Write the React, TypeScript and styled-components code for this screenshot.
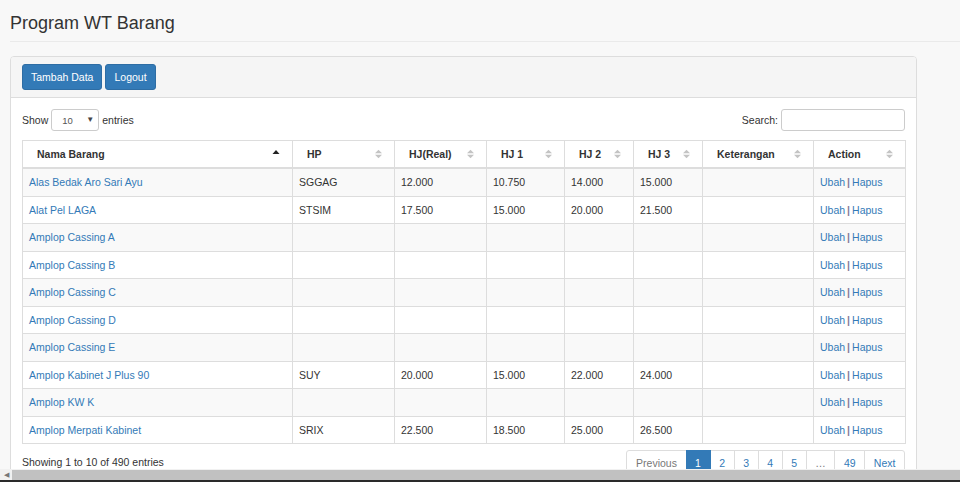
import React from "react";
import styled, { createGlobalStyle } from "styled-components";

const GlobalStyle = createGlobalStyle`
  html, body {
    margin: 0;
    padding: 0;
    height: 482px;
    overflow: hidden;
    background: #f8f8f8;
    font-family: "Liberation Sans", Arial, Helvetica, sans-serif;
    font-size: 10.5px;
    color: #333;
  }
  * { box-sizing: border-box; }
`;

const PageHeader = styled.div`
  margin-left: 10px;
  padding: 13px 0 8px;
  border-bottom: 1px solid #eaeaea;
`;

const Title = styled.h1`
  margin: 0;
  font-size: 18px;
  line-height: 20px;
  font-weight: 400;
  color: #333;
`;

const Panel = styled.div`
  margin: 14px 43px 0 10px;
  border: 1px solid #ddd;
  border-radius: 4px;
  background: #fff;
`;

const PanelHeading = styled.div`
  display: flex;
  gap: 3px;
  padding: 7px 11px;
  background: #f5f5f5;
  border-bottom: 1px solid #ddd;
  border-radius: 3px 3px 0 0;
`;

const Button = styled.button`
  font-family: inherit;
  font-size: 10.5px;
  line-height: 15px;
  padding: 4.5px 8px;
  color: #fff;
  background: #337ab7;
  border: 1px solid #2e6da4;
  border-radius: 3px;
  cursor: pointer;
`;

const PanelBody = styled.div`
  padding: 11px 11px 0;
`;

const Controls = styled.div`
  display: flex;
  justify-content: space-between;
  align-items: center;
  height: 22px;
  margin-bottom: 9px;
`;

const Label = styled.label`
  display: flex;
  align-items: center;
  gap: 3px;
  line-height: 15px;
`;

const SelectWrap = styled.span`
  position: relative;
  display: inline-block;
`;

const Select = styled.select`
  appearance: none;
  -webkit-appearance: none;
  width: 48px;
  height: 22px;
  padding: 0 0 0 10px;
  font-family: inherit;
  font-size: 9.5px;
  color: #555;
  background: #fff;
  border: 1px solid #ccc;
  border-radius: 3px;
  outline: none;
`;

const SelectArrow = styled.span`
  position: absolute;
  right: 5px;
  top: 6px;
  font-size: 8px;
  line-height: 10px;
  color: #444;
  pointer-events: none;
`;

const SearchInput = styled.input`
  width: 124px;
  height: 22px;
  border: 1px solid #ccc;
  border-radius: 3px;
  background: #fff;
  outline: none;
`;

const Table = styled.table`
  width: 883px;
  table-layout: fixed;
  border-collapse: collapse;
  border: 1px solid #ddd;
  margin-bottom: 6px;
`;

const Th = styled.th`
  position: relative;
  text-align: left;
  font-weight: 700;
  font-size: 10.5px;
  line-height: 14px;
  padding: 6px 22px 6px 14px;
  border: 1px solid #ddd;
  border-bottom: 2px solid #ddd;
  color: #333;
  background: #fff;
  white-space: nowrap;
`;

const SortIcon = styled.svg`
  position: absolute;
  right: 12px;
  top: 50%;
  transform: translateY(-50%);
`;

const Tr = styled.tr<{ $odd: boolean }>`
  background: ${(p) => (p.$odd ? "#f9f9f9" : "#fff")};
`;

const Td = styled.td`
  padding: 6px;
  line-height: 14.5px;
  font-size: 10.5px;
  border: 1px solid #ddd;
  color: #333;
  white-space: nowrap;
  overflow: hidden;
`;

const Link = styled.a`
  color: #337ab7;
  text-decoration: none;
`;

const Sep = styled.span`
  color: #86789a;
  font-weight: 700;
  margin: 0 2px;
`;

const Footer = styled.div`
  display: flex;
  justify-content: space-between;
  align-items: center;
`;

const Info = styled.div`
  line-height: 15px;
  padding-bottom: 2px;
`;

const Pagination = styled.ul`
  display: flex;
  list-style: none;
  margin: 0;
  padding: 0;
`;

const PageItem = styled.li<{ $active?: boolean; $disabled?: boolean; $first?: boolean; $last?: boolean }>`
  margin-left: ${(p) => (p.$first ? "0" : "-1px")};
  padding: 4.5px 8.6px;
  line-height: 15px;
  border: 1px solid ${(p) => (p.$active ? "#337ab7" : "#ddd")};
  background: ${(p) => (p.$active ? "#337ab7" : "#fff")};
  color: ${(p) => (p.$active ? "#fff" : p.$disabled ? "#777" : "#337ab7")};
  border-radius: ${(p) => (p.$first ? "3px 0 0 3px" : p.$last ? "0 3px 3px 0" : "0")};
  position: relative;
  z-index: ${(p) => (p.$active ? 2 : 1)};
`;

const ScrollBar = styled.div`
  position: fixed;
  left: 0;
  right: 0;
  bottom: 0;
  height: 13px;
  display: flex;
  background: #f1f1f1;
  border-bottom: 2px solid #2a2a2a;
  z-index: 10;
`;

const ScrollArrow = styled.div`
  width: 12px;
  display: flex;
  align-items: center;
  justify-content: center;
  font-size: 7px;
  color: #777;
`;

const ScrollThumb = styled.div`
  flex: 1;
  margin: 1px 0 0;
  background: #c1c1c1;
`;

const colWidths = [270, 102, 92, 78, 69, 69, 111, 92];
const headers = ["Nama Barang", "HP", "HJ(Real)", "HJ 1", "HJ 2", "HJ 3", "Keterangan", "Action"];

const rows: string[][] = [
  ["Alas Bedak Aro Sari Ayu", "SGGAG", "12.000", "10.750", "14.000", "15.000"],
  ["Alat Pel LAGA", "STSIM", "17.500", "15.000", "20.000", "21.500"],
  ["Amplop Cassing A", "", "", "", "", ""],
  ["Amplop Cassing B", "", "", "", "", ""],
  ["Amplop Cassing C", "", "", "", "", ""],
  ["Amplop Cassing D", "", "", "", "", ""],
  ["Amplop Cassing E", "", "", "", "", ""],
  ["Amplop Kabinet J Plus 90", "SUY", "20.000", "15.000", "22.000", "24.000"],
  ["Amplop KW K", "", "", "", "", ""],
  ["Amplop Merpati Kabinet", "SRIX", "22.500", "18.500", "25.000", "26.500"],
];

const SortBoth = () => (
  <SortIcon width="7" height="9" viewBox="0 0 7 9">
    <polygon points="0,3.8 3.5,0.3 7,3.8" fill="#c4c4c4" />
    <polygon points="0,5.2 3.5,8.7 7,5.2" fill="#c4c4c4" />
  </SortIcon>
);

const SortAsc = () => (
  <SortIcon width="8" height="9" viewBox="0 0 8 9" style={{ marginTop: -1 }}>
    <polygon points="0.5,5.5 4,1.5 7.5,5.5" fill="#222" />
  </SortIcon>
);

export default function App() {
  return (
    <>
      <GlobalStyle />
      <PageHeader>
        <Title>Program WT Barang</Title>
      </PageHeader>
      <Panel>
        <PanelHeading>
          <Button>Tambah Data</Button>
          <Button>Logout</Button>
        </PanelHeading>
        <PanelBody>
          <Controls>
            <Label>
              Show
              <SelectWrap>
                <Select defaultValue="10">
                  <option value="10">10</option>
                  <option value="25">25</option>
                  <option value="50">50</option>
                  <option value="100">100</option>
                </Select>
                <SelectArrow>▼</SelectArrow>
              </SelectWrap>
              entries
            </Label>
            <Label>
              Search:
              <SearchInput type="search" />
            </Label>
          </Controls>
          <Table>
            <colgroup>
              {colWidths.map((w, i) => (
                <col key={i} style={{ width: w }} />
              ))}
            </colgroup>
            <thead>
              <tr>
                {headers.map((h, i) => (
                  <Th key={h}>
                    {h}
                    {i === 0 ? <SortAsc /> : <SortBoth />}
                  </Th>
                ))}
              </tr>
            </thead>
            <tbody>
              {rows.map((r, i) => (
                <Tr key={r[0]} $odd={i % 2 === 0}>
                  <Td>
                    <Link href="#">{r[0]}</Link>
                  </Td>
                  {r.slice(1).map((c, j) => (
                    <Td key={j}>{c}</Td>
                  ))}
                  <Td />
                  <Td>
                    <Link href="#">Ubah</Link>
                    <Sep>|</Sep>
                    <Link href="#">Hapus</Link>
                  </Td>
                </Tr>
              ))}
            </tbody>
          </Table>
          <Footer>
            <Info>Showing 1 to 10 of 490 entries</Info>
            <Pagination>
              <PageItem $first $disabled>Previous</PageItem>
              <PageItem $active>1</PageItem>
              <PageItem>2</PageItem>
              <PageItem>3</PageItem>
              <PageItem>4</PageItem>
              <PageItem>5</PageItem>
              <PageItem $disabled>…</PageItem>
              <PageItem>49</PageItem>
              <PageItem $last>Next</PageItem>
            </Pagination>
          </Footer>
        </PanelBody>
      </Panel>
      <ScrollBar>
        <ScrollArrow>◀</ScrollArrow>
        <ScrollThumb />
      </ScrollBar>
    </>
  );
}
